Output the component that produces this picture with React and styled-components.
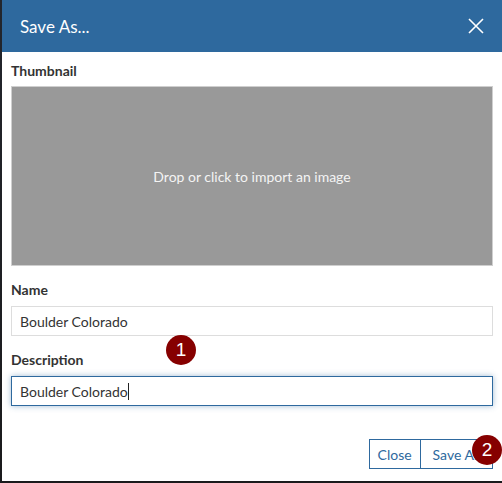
import React from 'react'
import styled, { createGlobalStyle } from 'styled-components'

const GlobalStyle = createGlobalStyle`
  html, body {
    margin: 0;
    padding: 0;
    background: #1b1b1e;
    font-family: Lato, "Open Sans", Arial, sans-serif;
  }
`

const Page = styled.div`
  position: relative;
  width: 502px;
  height: 483px;
  overflow: hidden;
  background: linear-gradient(180deg, #23262d 0%, #1a1a1c 100%);
`

const Dialog = styled.div`
  margin-left: 2px;
  width: 500px;
  height: 481px;
  background: #ffffff;
  display: flex;
  flex-direction: column;
`

const Header = styled.div`
  height: 52px;
  flex: none;
  background: #2e699e;
  display: flex;
  align-items: center;
  justify-content: space-between;
  padding: 0 17px 0 18px;
`

const Title = styled.h2`
  margin: 0;
  font-size: 17px;
  font-weight: 400;
  color: #ffffff;
`

const CloseX = styled.button`
  border: 0;
  background: none;
  padding: 0;
  width: 18px;
  height: 18px;
  display: flex;
  cursor: pointer;
`

const Body = styled.div`
  padding: 9px 9px 0 9px;
  display: flex;
  flex-direction: column;
`

const Label = styled.label`
  display: block;
  font-size: 14px;
  font-weight: 700;
  line-height: 20px;
  color: #333333;
  margin-top: ${p => p.$first ? '0' : '14px'};
  margin-bottom: ${p => p.$first ? '5px' : '6px'};
`

const Dropzone = styled.div`
  height: 178px;
  background: #999999;
  border: 1px solid #cfcfcf;
  display: flex;
  align-items: center;
  justify-content: center;
  color: #f4f4f4;
  font-size: 14px;
  cursor: pointer;
`

const Field = styled.div`
  box-sizing: border-box;
  height: 30px;
  border: 1px solid ${p => p.$focused ? '#2e699e' : '#dddddd'};
  box-shadow: ${p => p.$focused ? '0 0 6px rgba(46, 105, 158, 0.45)' : 'none'};
  display: flex;
  align-items: center;
  padding: 0 8px;
  font-size: 14px;
  color: #333333;
`

const Caret = styled.span`
  display: inline-block;
  width: 1px;
  height: 17px;
  background: #222;
`

const Footer = styled.div`
  display: flex;
  justify-content: flex-end;
  margin-top: 33px;
`

const Button = styled.button`
  box-sizing: border-box;
  height: 30px;
  padding: 0 ${p => p.$pad}px;
  background: #ffffff;
  border: 1px solid #2e699e;
  margin-left: -1px;
  color: #2e699e;
  font-family: Lato, Arial, sans-serif;
  font-size: 14px;
  cursor: pointer;
`

const Badge = styled.div`
  position: absolute;
  left: ${p => p.$x}px;
  top: ${p => p.$y}px;
  width: 30px;
  height: 30px;
  border-radius: 50%;
  background: #860000;
  color: #ffffff;
  font-family: "Liberation Sans", Arial, sans-serif;
  font-size: 19px;
  display: flex;
  align-items: center;
  justify-content: center;
`

export default function App() {
  return (
    <Page>
      <GlobalStyle />
      <Dialog>
        <Header>
          <Title>Save As...</Title>
          <CloseX aria-label="Close">
            <svg width="18" height="18" viewBox="0 0 18 18">
              <path d="M2 2 L16 16 M16 2 L2 16" stroke="#fff" strokeWidth="1.6" />
            </svg>
          </CloseX>
        </Header>
        <Body>
          <Label $first>Thumbnail</Label>
          <Dropzone>Drop or click to import an image</Dropzone>
          <Label>Name</Label>
          <Field>Boulder Colorado</Field>
          <Label>Description</Label>
          <Field $focused>Boulder Colorado<Caret /></Field>
          <Footer>
            <Button $pad={8}>Close</Button>
            <Button $pad={12}>Save As</Button>
          </Footer>
        </Body>
      </Dialog>
      <Badge $x={166} $y={335}>1</Badge>
      <Badge $x={472} $y={435}>2</Badge>
    </Page>
  )
}
